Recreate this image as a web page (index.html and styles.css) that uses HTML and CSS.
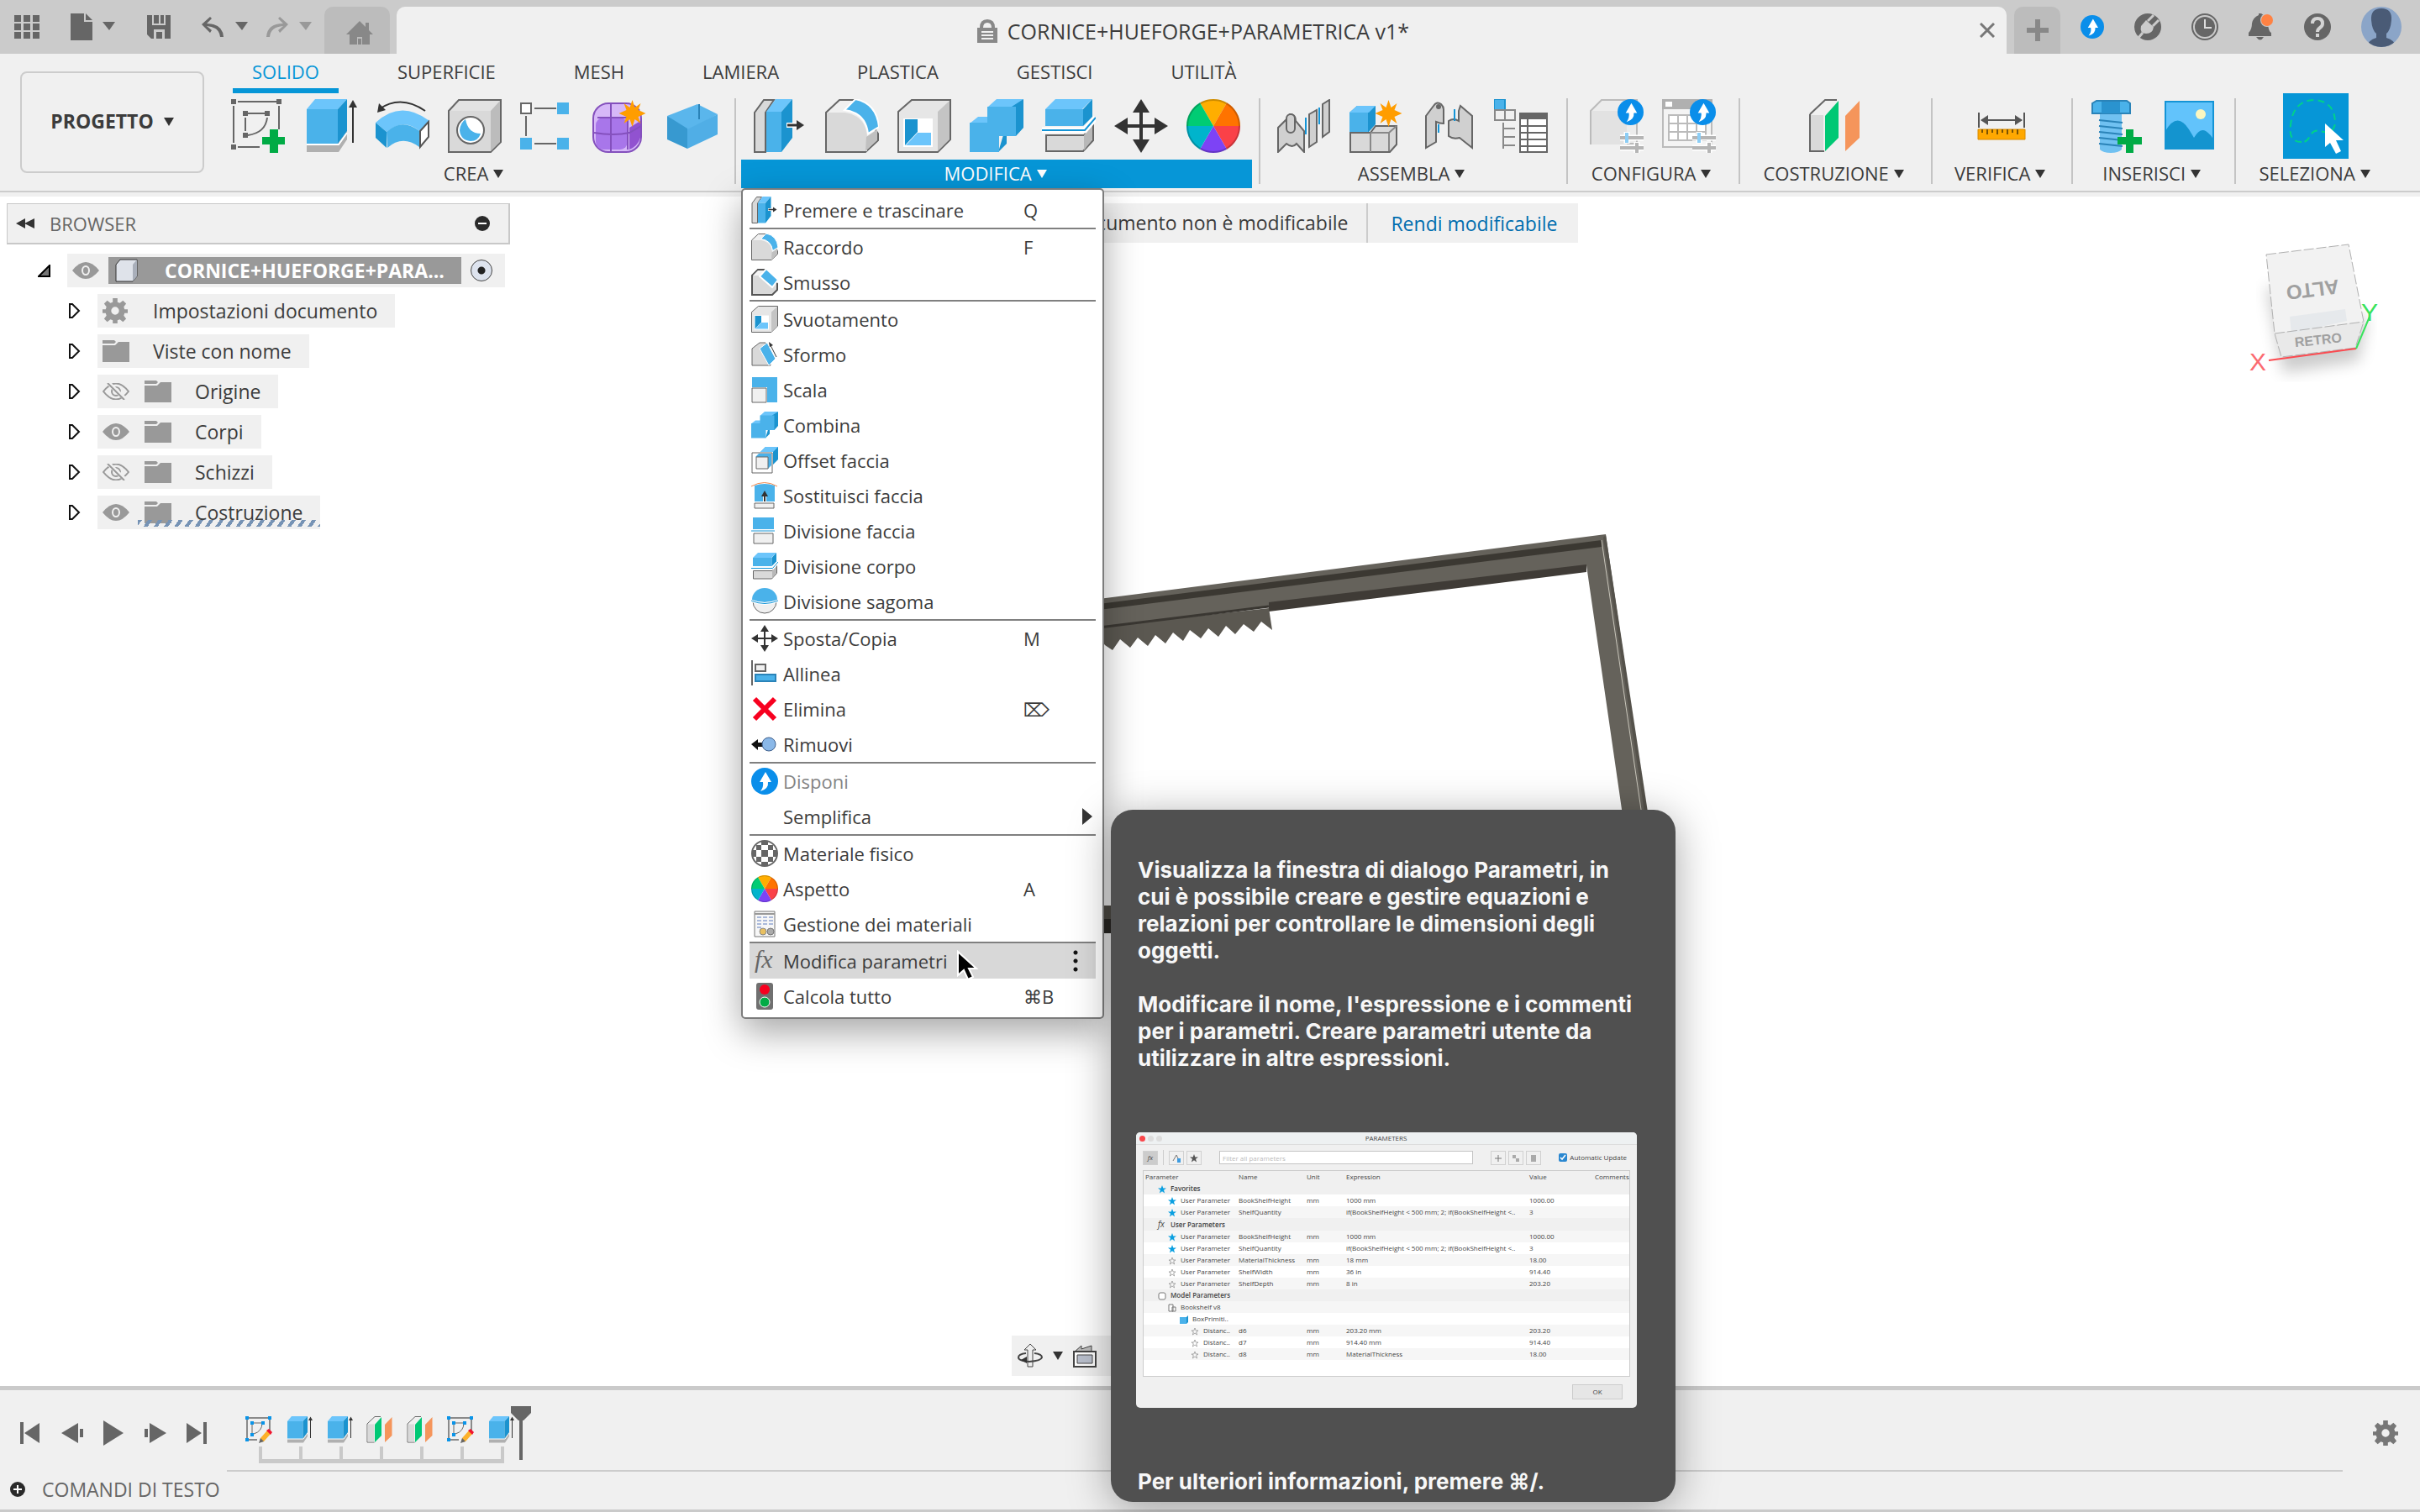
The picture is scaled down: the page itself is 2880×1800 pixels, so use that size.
FILE: index.html
```html
<!DOCTYPE html>
<html lang="it">
<head>
    <meta charset="UTF-8">
    <meta name="viewport" content="width=device-width, initial-scale=1.0">
    <title>CORNICE+HUEFORGE+PARAMETRICA v1*</title>
    <link rel="stylesheet" href="styles.css">
</head>
<body>
    <!-- shared icons -->
    <svg class="sprite" aria-hidden="true">
        <symbol id="i-extrude" viewBox="0 0 64 64">
            <path d="M4 54h36l12-16v10L42 63H4z" fill="#b0b0b0"/>
            <path d="M4 54h38l10-14" fill="none" stroke="#fff" stroke-width="2"/>
            <path d="M4 12L14 0h38L41 12z" fill="#6cc5fb"/>
            <path d="M4 12h37v41H4z" fill="#4ab2ea"/>
            <path d="M41 12L52 0v38L41 53z" fill="#1b93cf"/>
            <path d="M59 52V6" stroke="#333" stroke-width="2"/>
            <path d="M59 1l5 9H54z" fill="#333"/>
        </symbol>
        <symbol id="i-planes" viewBox="0 0 64 64">
            <path d="M2 18L20 1h14M2 18v44h17" fill="#f0f0f0" stroke="#666" stroke-width="2"/>
            <path d="M3 19h15v42H3z" fill="#d9d9d9"/>
            <path d="M20 20L36 2v44L20 62z" fill="#00c874"/>
            <path d="M44 20L61 2v44L44 62z" fill="#f5955b"/>
        </symbol>
        <symbol id="i-sketch-edit" viewBox="0 0 32 32">
            <path d="M4 2h24M2 4v23M29 4v14M4 28h10" fill="none" stroke="#8a8a8a" stroke-width="2"/>
            <path d="M8 8v13M9 8h11q0 10-10 13" fill="none" stroke="#666"/>
            <path d="M0 0h4v4H0zM27 0h4v4h-4zM0 26h4v4H0zM6 6h4v4H6zM19 6h4v4h-4zM6 20h4v4H6z" fill="#0a94e8"/>
            <path d="M18 26l8-9 4 4-8 9-5 1z" fill="#fcb12b"/>
            <path d="M18 26l4 4-6 2z" fill="#666"/>
            <path d="M25 17l3-2 4 4-2 3z" fill="#f0142f"/>
        </symbol>
        <symbol id="i-press" viewBox="0 0 64 64">
            <path d="M2 63V16L13 1h12L15 16v47z" fill="#d9d9d9" stroke="#666" stroke-width="2"/>
            <path d="M16 15L27 0h20L34 15z" fill="#6cc5fb"/>
            <path d="M16 15h18v48H16z" fill="#4ab2ea"/>
            <path d="M34 15L47 0v46L34 63z" fill="#1b93cf"/>
            <path d="M40 31h16" stroke="#fff" stroke-width="6"/>
            <path d="M41 31h13" stroke="#333" stroke-width="3"/>
            <path d="M52 25l9 6-9 6z" fill="#333"/>
        </symbol>
        <symbol id="i-fillet" viewBox="0 0 64 64">
            <path d="M1 63V16L17 1h18l28 40v8L48 63z" fill="#f0f0f0" stroke="#666" stroke-width="2"/>
            <path d="M2 16h22q24 4 26 28v18H2z" fill="#d9d9d9"/>
            <path d="M49 45l13-9v13L48 62z" fill="#c0c0c0"/>
            <path d="M23 13L36 0q25 5 28 33L51 41Q48 16 23 13z" fill="#4ab2ea" stroke="#fff" stroke-width="2"/>
        </symbol>
        <symbol id="i-shell" viewBox="0 0 64 64">
            <path d="M1 15L17 1h46v47L48 63H1z" fill="#e6e6e6" stroke="#666" stroke-width="2"/>
            <path d="M48 15L62 2v46L48 62z" fill="#c4c4c4"/>
            <path d="M7 23h35v34H7z" fill="#fff"/>
            <path d="M9 24h15v15L9 55z" fill="#1b93cf"/>
            <path d="M24 40h16v15H10z" fill="#6cc5fb"/>
        </symbol>
        <symbol id="i-combine" viewBox="0 0 64 64">
            <path d="M0 29l10-8h12V9L32 0h32L54 9 40 44 0 40z" fill="#6cc5fb"/>
            <path d="M64 0v34l-9 10H44v9L34 63 50 9z" fill="#1b93cf"/>
            <path d="M0 28h21V9h34v35H35v19H0z" fill="#4ab2ea"/>
        </symbol>
        <symbol id="i-splitbody" viewBox="0 0 64 64">
            <path d="M5 43h45l11-14v20L49 62H5z" fill="#d9d9d9" stroke="#666" stroke-width="2"/>
            <path d="M50 43l10-13v18L50 61z" fill="#b8b8b8"/>
            <path d="M4 12L16 0h44L48 12z" fill="#6cc5fb"/>
            <path d="M4 12h45v20H4z" fill="#4ab2ea"/>
            <path d="M49 12L60 0v21L49 32z" fill="#1b93cf"/>
            <path d="M0 37h51l13-15" fill="none" stroke="#fff" stroke-width="7"/>
            <path d="M0 37h51l13-15" fill="none" stroke="#1494d6" stroke-width="2"/>
        </symbol>
        <symbol id="i-move" viewBox="0 0 64 64">
            <path d="M32 0l10 16h-8v14h14v-8l16 10-16 10v-8H34v14h8L32 64 22 48h8V34H16v8L0 32l16-10v8h14V16h-8z" fill="#333"/>
        </symbol>
        <symbol id="i-wheel" viewBox="0 0 64 64">
            <path d="M32 32L16 4.300A32 32 0 0 1 48 4.300z" fill="#ffae00"/>
            <path d="M32 32L48 4.300A32 32 0 0 1 64 32z" fill="#ff7300"/>
            <path d="M32 32H64A32 32 0 0 1 48 59.700z" fill="#fa4148"/>
            <path d="M32 32L48 59.700A32 32 0 0 1 16 59.700z" fill="#7d43f5"/>
            <path d="M32 32L16 59.700A32 32 0 0 1 0 32z" fill="#00b4cc"/>
            <path d="M32 32H0A32 32 0 0 1 16 4.300z" fill="#00cc74"/>
            <circle cx="32" cy="32" r="31" fill="none" stroke="#000" stroke-opacity=".2" stroke-width="2"/>
        </symbol>
        <symbol id="i-up" viewBox="0 0 32 32">
            <circle cx="16" cy="16" r="16" fill="#0a8eea"/>
            <path d="M17 5l7 12h-4q1 8-9 11 4-5 3-11h-4z" fill="#fff"/>
        </symbol>
        <symbol id="i-burst" viewBox="0 0 32 32">
            <path d="M16 0l3 9 7-5-3 8 9 4-9 4 3 8-7-5-3 9-3-9-7 5 3-8-9-4 9-4-3-8 7 5z" fill="#ff9d00"/>
        </symbol>
        <symbol id="i-eye" viewBox="0 0 32 20">
            <path d="M0 10Q16-10 32 10 16 30 0 10z" fill="#999"/>
            <ellipse cx="16" cy="10" rx="4" ry="5" fill="none" stroke="#f0f0f0" stroke-width="2"/>
        </symbol>
        <symbol id="i-eyeoff" viewBox="0 0 32 20">
            <path d="M1 10Q16-9 31 10 16 29 1 10z" fill="none" stroke="#999" stroke-width="2"/>
            <circle cx="16" cy="10" r="5" fill="none" stroke="#999" stroke-width="2"/>
            <path d="M7 0l20 19" stroke="#f0f0f0" stroke-width="5"/>
            <path d="M6 0l20 20" stroke="#999" stroke-width="2"/>
        </symbol>
        <symbol id="i-folder" viewBox="0 0 32 26">
            <path d="M0 0h14l2 2-2 2H0z" fill="#999"/>
            <path d="M0 6h15l4-4h13v24H0z" fill="#999"/>
        </symbol>
        <symbol id="i-gear" viewBox="0 0 32 32">
            <path d="M13 0h6v5l3 1 4-3 4 4-3 4 1 3h4v5h-4l-1 3 3 4-4 4-4-3-3 1v4h-6v-4l-3-1-4 3-4-4 3-4-1-3H0v-5h4l1-3-3-4 4-4 4 3 3-1zM16 11a5 5 0 1 0 0 10 5 5 0 0 0 0-10z" fill="currentColor" fill-rule="evenodd"/>
        </symbol>
        <symbol id="i-star" viewBox="0 0 10 10">
            <path d="M5 0l1.300 3.500H10L7 5.800 8.100 9.500 5 7.300 1.900 9.500 3 5.800 0 3.500h3.700z" fill="#0a9fe0"/>
        </symbol>
        <symbol id="i-star-o" viewBox="0 0 10 10">
            <path d="M5 1l1.200 3H9L6.700 5.700 7.600 9 5 7 2.400 9l.9-3.300L1 4h2.800z" fill="none" stroke="#888" stroke-width=".7"/>
        </symbol>
    </svg>

    <header class="titlebar">
        <nav class="quick">
            <button class="q" aria-label="Pannello dati"><svg width="30" height="28"><path d="M0 0h8v8H0zM11 0h8v8h-8zM22 0h8v8h-8zM0 10h8v8H0zM11 10h8v8h-8zM22 10h8v8h-8zM0 20h8v8H0zM11 20h8v8h-8zM22 20h8v8h-8z"/></svg></button>
            <button class="q" aria-label="File"><svg width="54" height="32"><path d="M0 0h16v10h10v22H0zM18 0l8 8h-8zM38 10h15l-7 10z"/></svg></button>
            <button class="q" aria-label="Salva"><svg width="28" height="28"><path d="M0 0h28v28H5l-5-5zM6 0v12h16V0h-2v10h-4V0h-2v10H8V0zM8 28h3v-8h7v8h3V17H8z" fill-rule="evenodd"/></svg></button>
            <button class="q" aria-label="Annulla"><svg width="56" height="24"><path d="M0 9L10 0l2 2-6 6q19 0 20 16h-4Q21 12 6 11l6 5-2 3zM40 6h15l-7 10z"/></svg></button>
            <button class="q q-redo" aria-label="Ripeti"><svg width="56" height="24"><path d="M27 9L17 0l-2 2 6 6Q2 8 1 24h4Q6 12 21 11l-6 5 2 3zM40 6h15l-7 10z"/></svg></button>
        </nav>
        <button class="tab-home" aria-label="Pagina iniziale"><svg width="32" height="28"><path d="M16 0l7 7V2h4v9l5 5h-4v12h-9v-9h-6v9H4V16H0zM14 28v-7h4v7z" fill="#888"/></svg></button>
        <div class="tab-doc">
            <span class="doc-name"><svg width="24" height="28"><path d="M3 10Q3 0 12 0t9 10h3v18H0V10zM7 10h10q0-6-5-6t-5 6z" fill="#888" fill-rule="evenodd"/><path d="M5 15h14M5 19h14M5 23h14" stroke="#f0f0f0" stroke-width="2"/></svg>CORNICE+HUEFORGE+PARAMETRICA v1*</span>
            <button class="close" aria-label="Chiudi"><svg width="18" height="18"><path d="M1 1l16 16M17 1L1 17" stroke="#777" stroke-width="3"/></svg></button>
        </div>
        <button class="tab-new" aria-label="Nuovo progetto"><svg width="26" height="26"><path d="M10 0h6v10h10v6H16v10h-6V16H0v-6h10z" fill="#888"/></svg></button>
        <nav class="account">
            <button aria-label="Aggiorna"><svg width="28" height="28"><use href="#i-up"/></svg></button>
            <button aria-label="Estensioni"><svg width="32" height="32"><circle cx="16" cy="16" r="16" fill="#666"/><path d="M8 15q-2 9 6 9 8 0 9-8l-9-8z" fill="#cbcbcb"/><path d="M16 9l7-7M22 15l7-7M10 23l-6 7" stroke="#cbcbcb" stroke-width="3"/></svg></button>
            <button aria-label="Stato processi"><svg width="32" height="32"><circle cx="16" cy="16" r="15" fill="none" stroke="#666" stroke-width="2"/><circle cx="16" cy="16" r="12" fill="#666"/><path d="M16 7v10h8" fill="none" stroke="#ddd" stroke-width="2"/></svg></button>
            <button aria-label="Notifiche"><svg width="30" height="32"><path d="M12 0h3q7 4 8 13 1 9 4 10v4H0v-4q4-4 4-11 1-7 8-10zM9 28h9q-4 7-9 0z" fill="#666"/><circle cx="22" cy="8" r="8" fill="#cbcbcb"/><circle cx="22" cy="8" r="7" fill="#ff8243"/></svg></button>
            <button aria-label="Guida"><svg width="32" height="32"><circle cx="16" cy="16" r="16" fill="#666"/><path d="M10 12q0-6 6-6t6 6q0 3-3 5t-3 5" fill="none" stroke="#d4d4d4" stroke-width="4"/><path d="M14 24h4v4h-4z" fill="#d4d4d4"/></svg></button>
            <button aria-label="Profilo"><svg width="48" height="48" viewBox="0 0 48 48"><clipPath id="av"><circle cx="24" cy="24" r="24"/></clipPath><g clip-path="url(#av)"><path d="M0 0h48v48H0z" fill="#8ba5c8"/><path d="M24 2q13 0 12 14-1 12-6 16v5q10 3 12 11H6q2-8 12-11v-5q-5-4-6-16Q11 2 24 2z" fill="#4a5b76"/></g></svg></button>
        </nav>
    </header>

    <section class="ribbon">
        <button class="workspace">PROGETTO <i class="caret"></i></button>
        <div class="ribbon-main">
            <nav class="tabs">
                <a href="#" class="active">SOLIDO</a>
                <a href="#">SUPERFICIE</a>
                <a href="#">MESH</a>
                <a href="#">LAMIERA</a>
                <a href="#">PLASTICA</a>
                <a href="#">GESTISCI</a>
                <a href="#">UTILITÀ</a>
            </nav>
            <div class="groups">
                <div class="group">
                    <div class="tools">
                        <button aria-label="Crea schizzo"><svg viewBox="0 0 64 64"><path d="M8 3h46M3 8v44M57 8v28M8 57h26" fill="none" stroke="#666" stroke-width="2"/><path d="M17 22v16M20 17h22M43 22Q41 40 20 43" fill="none" stroke="#666" stroke-width="2"/><path d="M0 0h6v6H0zM54 0h6v6h-6zM0 54h6v6H0zM14 14h6v6h-6zM40 14h6v6h-6zM14 40h6v6h-6z" fill="#666"/><path d="M46 36h10v9h9v9h-9v10H46V54h-9v-9h9z" fill="#00ab45"/></svg></button>
                        <button aria-label="Estrusione"><svg><use href="#i-extrude"/></svg></button>
                        <button aria-label="Rivoluzione"><svg viewBox="0 0 64 64"><path d="M0 28Q30 0 64 26L52 38Q34 22 13 39z" fill="#6cc5fb"/><path d="M13 39Q32 22 52 38V57Q32 42 14 58z" fill="#4ab2ea"/><path d="M0 28l13 11v19L0 46z" fill="#1b93cf"/><path d="M53 38l10-11v18L53 57z" fill="#fff" stroke="#555" stroke-width="2"/><path d="M4 12Q30-6 59 14" fill="none" stroke="#333" stroke-width="2"/><path d="M2 16L4 5l8 8z" fill="#333"/></svg></button>
                        <button aria-label="Foro"><svg viewBox="0 0 64 64"><path d="M1 14L13 1h50v50L51 63H1z" fill="#e2e2e2" stroke="#666" stroke-width="2"/><path d="M2 14h49v48H2z" fill="#d9d9d9"/><path d="M51 14L62 2v49L51 62z" fill="#bcbcbc"/><circle cx="27" cy="37" r="16" fill="#fff" stroke="#666" stroke-width="2"/><path d="M21 24q3 17 18 17-3 9-12 9-12-1-13-13 1-9 7-13z" fill="#4ab2ea"/></svg></button>
                        <button aria-label="Serie rettangolare"><svg viewBox="0 0 64 64"><path d="M17 11h26M17 53h26M7 20v24" stroke="#666" stroke-width="2"/><path d="M1 5h12v12H1z" fill="#fff" stroke="#666" stroke-width="2"/><path d="M44 4h14v14H44zM0 46h14v14H0zM44 46h14v14H44z" fill="#4ab2ea"/></svg></button>
                        <button aria-label="Crea forma"><svg viewBox="0 0 64 64"><rect x="1" y="5" width="57" height="58" rx="18" fill="#d6b8f8" stroke="#8450bd" stroke-width="2"/><path d="M44 34l13-8v20q-3 10-13 14z" fill="#9152d0"/><rect x="4" y="22" width="38" height="38" rx="9" fill="#a876ea"/><path d="M2 40q24 4 42 0l14-8M22 5v57M6 22h36l14-10M42 22v38" fill="none" stroke="#8450bd" stroke-width="2"/><svg x="31" y="1" width="33" height="32" viewBox="0 0 32 32"><use href="#i-burst"/></svg></svg></button>
                        <button aria-label="Parallelepipedo"><svg viewBox="0 0 64 64"><path d="M3 20L39 6l24 12-36 20z" fill="#5ab6ec"/><path d="M3 20l24 15v24L3 48z" fill="#3799d0"/><path d="M27 36l36-18v24L27 59z" fill="#50aee6"/><path d="M41 6v18" stroke="#2a83b8" stroke-width="2"/></svg></button>
                    </div>
                    <button class="label">CREA <i class="caret"></i></button>
                </div>
                <div class="group group-open">
                    <div class="tools">
                        <button aria-label="Premere e trascinare"><svg><use href="#i-press"/></svg></button>
                        <button aria-label="Raccordo"><svg><use href="#i-fillet"/></svg></button>
                        <button aria-label="Svuotamento"><svg><use href="#i-shell"/></svg></button>
                        <button aria-label="Combina"><svg><use href="#i-combine"/></svg></button>
                        <button aria-label="Divisione corpo"><svg><use href="#i-splitbody"/></svg></button>
                        <button aria-label="Sposta/Copia"><svg><use href="#i-move"/></svg></button>
                        <button aria-label="Aspetto"><svg><use href="#i-wheel"/></svg></button>
                    </div>
                    <button class="label" aria-expanded="true">MODIFICA <i class="caret"></i></button>

                    <div class="menu">
                        <button class="item"><svg><use href="#i-press"/></svg><span>Premere e trascinare</span><kbd>Q</kbd></button>
                        <hr>
                        <button class="item"><svg><use href="#i-fillet"/></svg><span>Raccordo</span><kbd>F</kbd></button>
                        <button class="item"><svg viewBox="0 0 32 32"><path d="M1 31V8l7-7h8l15 17v7l-6 6z" fill="#d9d9d9" stroke="#555" stroke-width="2"/><path d="M2 8l6-6h7l-5 6z" fill="#f4f4f4"/><path d="M10 9l8-9 14 13-7 9z" fill="#4ab2ea" stroke="#fff" stroke-width="2"/></svg><span>Smusso</span></button>
                        <hr>
                        <button class="item"><svg><use href="#i-shell"/></svg><span>Svuotamento</span></button>
                        <button class="item"><svg viewBox="0 0 32 32"><path d="M1 29V9l9-7h7l6 27z" fill="#d9d9d9" stroke="#666"/><path d="M10 9l9-7 10 19-8 8z" fill="#4ab2ea" stroke="#fff"/><path d="M30 19L23 5" stroke="#333"/><path d="M21 1l5 4-4 2z" fill="#333"/></svg><span>Sformo</span></button>
                        <button class="item"><svg viewBox="0 0 32 32"><path d="M1 1h30v30H19V13H1z" fill="#4ab2ea"/><path d="M1 14h17v17H1z" fill="#f0f0f0" stroke="#666"/></svg><span>Scala</span></button>
                        <button class="item"><svg><use href="#i-combine"/></svg><span>Combina</span></button>
                        <button class="item"><svg viewBox="0 0 32 32"><path d="M11 6l6-6h15v15l-6 6V6z" fill="#1b93cf"/><path d="M11 6l6-6h15l-6 6z" fill="#6cc5fb"/><path d="M1 7h24v24H1z" fill="#fff" stroke="#666"/><path d="M5 12l4-4h15v14l-4 4V12z" fill="#4ab2ea"/><path d="M6 12h14v14H6z" fill="#f0f0f0" stroke="#666"/></svg><span>Offset faccia</span></button>
                        <button class="item"><svg viewBox="0 0 32 32"><path d="M4 23V4q12-4 24 0v19z" fill="#4ab2ea"/><path d="M0 5q16-9 31 0" fill="none" stroke="#f08a50"/><path d="M4 25h23v6H4z" fill="#f0f0f0" stroke="#666"/><path d="M16 24V14" stroke="#fff" stroke-width="4"/><path d="M16 23V14" stroke="#333" stroke-width="2"/><path d="M16 10l4 7h-8z" fill="#333"/></svg><span>Sostituisci faccia</span></button>
                        <button class="item"><svg viewBox="0 0 32 32"><path d="M2 0h25v14H2z" fill="#4ab2ea"/><path d="M3 19h23v12H3z" fill="#f0f0f0" stroke="#666"/><path d="M0 16h28" stroke="#1494d6"/></svg><span>Divisione faccia</span></button>
                        <button class="item"><svg><use href="#i-splitbody"/></svg><span>Divisione corpo</span></button>
                        <button class="item"><svg viewBox="0 0 32 32"><circle cx="16" cy="16" r="14" fill="#f0f0f0" stroke="#666"/><path d="M1 14a15 14 0 0 1 30 0q-15 6-30 0z" fill="#4ab2ea"/><path d="M0 15q16 7 32 0" fill="none" stroke="#fff" stroke-width="3"/><path d="M0 15q16 7 32 0" fill="none" stroke="#1494d6"/></svg><span>Divisione sagoma</span></button>
                        <hr>
                        <button class="item"><svg><use href="#i-move"/></svg><span>Sposta/Copia</span><kbd>M</kbd></button>
                        <button class="item"><svg viewBox="0 0 32 32"><path d="M1 0v30" stroke="#666" stroke-width="2"/><path d="M5 5h12v8H5z" fill="#f0f0f0" stroke="#666" stroke-width="2"/><path d="M5 17h24v8H5z" fill="#4ab2ea" stroke="#2a83b8" stroke-width="2"/></svg><span>Allinea</span></button>
                        <button class="item"><svg viewBox="0 0 32 32"><path d="M4 4l24 24M28 4L4 28" stroke="#f7001f" stroke-width="6"/></svg><span>Elimina</span><kbd>⌦</kbd></button>
                        <button class="item"><svg viewBox="0 0 32 32"><path d="M0 16l8-6v4h6v5H8v4z" fill="#111"/><circle cx="21" cy="16" r="8" fill="#8ab8e8" stroke="#3d5f8c"/></svg><span>Rimuovi</span></button>
                        <hr>
                        <button class="item" disabled><svg><use href="#i-up"/></svg><span>Disponi</span></button>
                        <button class="item"><svg></svg><span>Semplifica</span><i class="sub"></i></button>
                        <hr>
                        <button class="item"><svg viewBox="0 0 32 32"><circle cx="16" cy="16" r="15" fill="#fff" stroke="#666" stroke-width="2"/><path d="M12 12h8v8h-8zM6 6h6v6H6zM20 6h6v6h-6zM6 20h6v6H6zM20 20h6v6h-6zM12 1h8v5h-8zM12 26h8v5h-8zM1 12h5v8H1zM26 12h5v8h-5z" fill="#666"/></svg><span>Materiale fisico</span></button>
                        <button class="item"><svg><use href="#i-wheel"/></svg><span>Aspetto</span><kbd>A</kbd></button>
                        <button class="item"><svg viewBox="0 0 32 32"><path d="M4 1h24v30H4z" fill="#f7f7f7" stroke="#777"/><path d="M4 4h24" stroke="#999" stroke-width="2"/><path d="M7 8h5M14 8h5M21 8h5M7 12h5M14 12h5M21 12h5M7 16h5M14 16h5M21 16h5M7 20h5" stroke="#aab9da" stroke-width="2"/><circle cx="14" cy="25" r="4" fill="#e9c060" stroke="#888"/><circle cx="23" cy="25" r="4" fill="#aaa" stroke="#777"/></svg><span>Gestione dei materiali</span></button>
                        <hr>
                        <button class="item hover"><svg viewBox="0 0 32 32"><text class="fx" x="4" y="24">fx</text></svg><span>Modifica parametri</span><i class="dots"></i></button>
                        <button class="item"><svg viewBox="0 0 32 32"><rect x="6" y="0" width="20" height="32" rx="3" fill="#707070"/><circle cx="16" cy="8" r="6" fill="#f7001f"/><circle cx="16" cy="23" r="6" fill="#00ab45" stroke="#fff"/></svg><span>Calcola tutto</span><kbd>⌘B</kbd></button>

                        <svg class="cursor" width="28" height="40" viewBox="0 0 28 40"><path d="M2 2v28l7-6 5 11 6-3-5-10h9z" fill="#000" stroke="#fff" stroke-width="2"/></svg>

                        <div class="tooltip">
                            <p>Visualizza la finestra di dialogo Parametri, in cui è possibile creare e gestire equazioni e relazioni per controllare le dimensioni degli oggetti.</p>
                            <p>Modificare il nome, l'espressione e i commenti per i parametri. Creare parametri utente da utilizzare in altre espressioni.</p>
                            <div class="dialog">
                                <div class="dialog-title"><i class="red"></i><i></i><i></i><b>PARAMETERS</b></div>
                                <div class="dialog-bar">
                                    <button class="mini on"><em>fx</em></button>
                                    <span class="vr"></span>
                                    <button class="mini" aria-label="Nuovo"><svg viewBox="0 0 10 10"><path d="M1 8L5 1l2 4" fill="none" stroke="#777"/><path d="M6 5h4v5H6z" fill="#3d9be0"/></svg></button>
                                    <button class="mini" aria-label="Preferiti"><svg viewBox="0 0 10 10"><path d="M5 0l1.300 3.500H10L7 5.800 8.100 9.500 5 7.300 1.900 9.500 3 5.800 0 3.500h3.700z" fill="#555"/></svg></button>
                                    <input class="filter" type="text" placeholder="Filter all parameters" aria-label="Filter all parameters">
                                    <button class="mini" aria-label="Aggiungi"><svg viewBox="0 0 10 10"><path d="M5 1v8M1 5h8" stroke="#777"/></svg></button>
                                    <button class="mini" aria-label="Copia"><svg viewBox="0 0 10 10"><path d="M1 1h4v4H1zM5 5h4v4H5z" fill="#aaa"/></svg></button>
                                    <button class="mini" aria-label="Elimina"><svg viewBox="0 0 10 10"><path d="M2 1h6v8H2z" fill="#aaa"/></svg></button>
                                    <label class="auto"><input type="checkbox" checked>Automatic Update</label>
                                </div>
                                <div class="table-box">
                                <table>
                                    <colgroup><col class="c1"><col class="c2"><col class="c3"><col class="c4"><col class="c5"><col></colgroup>
                                    <thead><tr><th>Parameter</th><th>Name</th><th>Unit</th><th>Expression</th><th>Value</th><th>Comments</th></tr></thead>
                                    <tbody>
                                        <tr class="cat"><td colspan="6"><svg><use href="#i-star"/></svg>Favorites</td></tr>
                                        <tr><td class="l1"><svg><use href="#i-star"/></svg>User Parameter</td><td>BookShelfHeight</td><td>mm</td><td>1000 mm</td><td>1000.00</td><td></td></tr>
                                        <tr class="alt"><td class="l1"><svg><use href="#i-star"/></svg>User Parameter</td><td>ShelfQuantity</td><td></td><td>if(BookShelfHeight &lt; 500 mm; 2; if(BookShelfHeight &lt;..</td><td>3</td><td></td></tr>
                                        <tr class="cat"><td colspan="6"><em>fx</em>User Parameters</td></tr>
                                        <tr class="alt"><td class="l1"><svg><use href="#i-star"/></svg>User Parameter</td><td>BookShelfHeight</td><td>mm</td><td>1000 mm</td><td>1000.00</td><td></td></tr>
                                        <tr><td class="l1"><svg><use href="#i-star"/></svg>User Parameter</td><td>ShelfQuantity</td><td></td><td>if(BookShelfHeight &lt; 500 mm; 2; if(BookShelfHeight &lt;..</td><td>3</td><td></td></tr>
                                        <tr class="alt"><td class="l1"><svg><use href="#i-star-o"/></svg>User Parameter</td><td>MaterialThickness</td><td>mm</td><td>18 mm</td><td>18.00</td><td></td></tr>
                                        <tr><td class="l1"><svg><use href="#i-star-o"/></svg>User Parameter</td><td>ShelfWidth</td><td>mm</td><td>36 in</td><td>914.40</td><td></td></tr>
                                        <tr class="alt"><td class="l1"><svg><use href="#i-star-o"/></svg>User Parameter</td><td>ShelfDepth</td><td>mm</td><td>8 in</td><td>203.20</td><td></td></tr>
                                        <tr class="cat"><td colspan="6"><svg viewBox="0 0 10 10"><rect x="1" y="1" width="8" height="8" rx="2" fill="#fff" stroke="#777"/></svg>Model Parameters</td></tr>
                                        <tr class="alt"><td class="l1" colspan="6"><svg viewBox="0 0 10 10"><path d="M1 1h5v8H1zM5 4h4v5H5z" fill="#fff" stroke="#777"/></svg>Bookshelf v8</td></tr>
                                        <tr><td class="l2" colspan="6"><svg viewBox="0 0 10 10"><path d="M0 2h8v8H0z" fill="#4ab2ea"/><path d="M8 2l2-2v8l-2 2z" fill="#1b93cf"/></svg>BoxPrimiti..</td></tr>
                                        <tr class="alt"><td class="l3"><svg><use href="#i-star-o"/></svg>Distanc..</td><td>d6</td><td>mm</td><td>203.20 mm</td><td>203.20</td><td></td></tr>
                                        <tr><td class="l3"><svg><use href="#i-star-o"/></svg>Distanc..</td><td>d7</td><td>mm</td><td>914.40 mm</td><td>914.40</td><td></td></tr>
                                        <tr class="alt"><td class="l3"><svg><use href="#i-star-o"/></svg>Distanc..</td><td>d8</td><td>mm</td><td>MaterialThickness</td><td>18.00</td><td></td></tr>
                                    </tbody>
                                </table>
                                </div>
                                <button class="ok">OK</button>
                            </div>
                            <p class="more">Per ulteriori informazioni, premere ⌘/.</p>
                        </div>
                    </div>
                </div>
                <div class="group">
                    <div class="tools">
                        <button aria-label="Nuovo giunto"><svg viewBox="0 0 64 64"><g fill="#d0d0d0" stroke="#666" stroke-width="2"><path d="M54 6l8-5v38l-8 6z"/><path d="M38 18l9-5v38l-9 6z"/><path d="M1 34l10-10 4-6q7 0 7 8l10 12v25l-9-10q-5 6-12 0L1 63z"/><rect x="11" y="18" width="10" height="22" rx="5"/></g><path d="M34 22v20M50 10v20" stroke="#1494d6" stroke-width="2"/></svg></button>
                        <button aria-label="Nuovo componente"><svg viewBox="0 0 64 64"><path d="M0 16L9 8h22v22l-8 9H0z" fill="#1b93cf"/><path d="M0 16L9 8h22l-8 8z" fill="#6cc5fb"/><path d="M0 16h22v23H0z" fill="#4ab2ea"/><path d="M1 40h24l6-8h25v22l-8 9H1z" fill="#d9d9d9" stroke="#666" stroke-width="2"/><path d="M25 40v23M25 40h22l9-8M47 40v22" fill="none" stroke="#888" stroke-width="2"/><svg x="30" y="1" width="33" height="32" viewBox="0 0 32 32"><use href="#i-burst"/></svg></svg></button>
                        <button aria-label="Giunto"><svg viewBox="0 0 64 64"><g fill="#d0d0d0" stroke="#666" stroke-width="2"><path d="M5 20l9-12q4-6 9-2 3 3 3 6v17q-5 0-9-2v24L5 58z"/><path d="M44 14l2-6 14 12v38l-15-12q-8 2-13-2V26q6-4 12 0z"/></g><circle cx="20" cy="9" r="3" fill="#666"/><path d="M39 12v14M20 30v10" stroke="#1494d6" stroke-width="2"/></svg></button>
                        <button aria-label="Componenti"><svg viewBox="0 0 64 64"><path d="M0 0h13v13H0z" fill="#4ab2ea" stroke="#1b93cf" stroke-width="2"/><path d="M1 13h12v12H1zM13 13h12v12H13zM11 28v31M11 35h14M11 45h14M11 55h14" fill="none" stroke="#888" stroke-width="2"/><path d="M31 17h32v46H31z" fill="#fff" stroke="#666" stroke-width="2"/><path d="M30 16h34v8H30z" fill="#666"/><path d="M40 24v38M31 32h32M31 40h32M31 48h32M31 56h32" stroke="#666" stroke-width="2"/></svg></button>
                    </div>
                    <button class="label">ASSEMBLA <i class="caret"></i></button>
                </div>
                <div class="group">
                    <div class="tools">
                        <button aria-label="Configura"><svg viewBox="0 0 64 64"><path d="M1 14L14 1h42v52H1z" fill="#ececec" stroke="#bbb" stroke-width="2"/><path d="M2 14h42v40H2z" fill="#e2e2e2"/><path d="M36 46h28M36 58h28M44 39v14M56 51v13" stroke="#fff" stroke-width="7"/><path d="M36 46h28M36 58h28M56 52v12" stroke="#b5b5b5" stroke-width="4"/><path d="M44 40v12" stroke="#8ccdf5" stroke-width="4"/><svg x="33" y="0" width="31" height="31" viewBox="0 0 32 32"><use href="#i-up"/></svg></svg></button>
                        <button aria-label="Tabella"><svg viewBox="0 0 64 64"><path d="M1 1h58v56H1z" fill="#f4f4f4" stroke="#bbb" stroke-width="2"/><path d="M0 0h60v12H0z" fill="#b0b0b0"/><path d="M4 3h8v6H4z" fill="#fff"/><path d="M8 19h44v30H8zM8 29h44M8 39h44M19 19v30M30 19v30M41 19v30" fill="#fff" stroke="#bbb" stroke-width="2"/><path d="M36 46h28M36 58h28M44 39v14M56 51v13" stroke="#fff" stroke-width="7"/><path d="M36 46h28M36 58h28M56 52v12" stroke="#b5b5b5" stroke-width="4"/><path d="M44 40v12" stroke="#8ccdf5" stroke-width="4"/><svg x="33" y="0" width="31" height="31" viewBox="0 0 32 32"><use href="#i-up"/></svg></svg></button>
                    </div>
                    <button class="label">CONFIGURA <i class="caret"></i></button>
                </div>
                <div class="group">
                    <div class="tools"><button aria-label="Piano di offset"><svg><use href="#i-planes"/></svg></button></div>
                    <button class="label">COSTRUZIONE <i class="caret"></i></button>
                </div>
                <div class="group">
                    <div class="tools"><button aria-label="Misura"><svg viewBox="0 0 64 64"><path d="M5 16v18M59 16v18M8 25h48" stroke="#555" stroke-width="2"/><path d="M7 25l9-6v12zM57 25l-9-6v12z" fill="#555"/><path d="M4 36h56v12H4z" fill="#ffa800" stroke="#d98a00"/><path d="M9 36v4M15 36v6M21 36v4M27 36v6M33 36v4M39 36v6M45 36v4M51 36v6" stroke="#7a5200" stroke-width="2"/></svg></button></div>
                    <button class="label">VERIFICA <i class="caret"></i></button>
                </div>
                <div class="group">
                    <div class="tools">
                        <button aria-label="Inserisci elemento di fissaggio"><svg viewBox="0 0 64 64"><path d="M12 18h26v42q-4 4-13 4t-13-4z" fill="#70c1f1"/><path d="M11 25l28 3M11 32l28 3M11 39l28 3M11 46l28 3M11 53l28 3" stroke="#2a83b8" stroke-width="2"/><path d="M3 5l5-3h36l4 3v12H3z" fill="#4ab2ea" stroke="#2a83b8" stroke-width="2"/><path d="M14 3h22v14H14z" fill="#2a93cf"/><path d="M43 36h9v9h10v9H52v10h-9V54H33v-9h10z" fill="#00ab45"/></svg></button>
                        <button aria-label="Inserisci immagine"><svg viewBox="0 0 64 64"><path d="M4 3h57v56H4z" fill="#62c3fb" stroke="#1494d6" stroke-width="2"/><path d="M4 59V38Q18 14 32 36l6 10q7-12 14-8 6 4 9 10v11z" fill="#1494cf"/><circle cx="46" cy="18" r="6" fill="#fcf7c0"/></svg></button>
                    </div>
                    <button class="label">INSERISCI <i class="caret"></i></button>
                </div>
                <div class="group">
                    <div class="tools"><button class="selected" aria-label="Seleziona"><svg viewBox="0 0 78 78"><path d="M22 58Q6 58 9 38 12 8 38 8q24 2 24 28-2 14-18 9-8-2-12 6t-10 7z" fill="none" stroke="#00d28a" stroke-width="2" stroke-dasharray="8 5"/><path d="M50 36v28l6-5 7 13 6-3-6-13h9z" fill="#fff"/></svg></button></div>
                    <button class="label">SELEZIONA <i class="caret"></i></button>
                </div>
            </div>
        </div>
    </section>

    <main class="canvas">
        <aside class="browser">
            <div class="browser-head">
                <button aria-label="Riduci"><svg width="22" height="12"><path d="M0 6l11-6v12zM10 6l12-6v12z" fill="#333"/></svg></button>
                <span>BROWSER</span>
                <button class="right" aria-label="Opzioni"><svg width="18" height="18"><circle cx="9" cy="9" r="9" fill="#2a2a2a"/><path d="M4 9h10" stroke="#fff" stroke-width="2"/></svg></button>
            </div>
            <div class="row root">
                <svg width="15" height="15"><path d="M1 14L14 1v13z" fill="#777" stroke="#000" stroke-width="2"/></svg>
                <div class="chip">
                    <svg width="32" height="20"><use href="#i-eye"/></svg>
                    <div class="name"><svg width="28" height="28"><path d="M1 7l5-6h20v20l-5 6H1z" fill="#dfe3ea" stroke="#333"/><path d="M21 7l5-6v20l-5 6z" fill="#a9afba"/></svg>CORNICE+HUEFORGE+PARA...</div>
                    <input type="radio" checked aria-label="Attiva componente">
                </div>
            </div>
            <div class="row"><svg class="tri"><path d="M1 1h3l8 8-8 8H1z"/></svg><div class="chip"><svg class="g" width="30" height="30"><use href="#i-gear"/></svg><span>Impostazioni documento</span></div></div>
            <div class="row"><svg class="tri"><path d="M1 1h3l8 8-8 8H1z"/></svg><div class="chip"><svg width="32" height="26"><use href="#i-folder"/></svg><span>Viste con nome</span></div></div>
            <div class="row"><svg class="tri"><path d="M1 1h3l8 8-8 8H1z"/></svg><div class="chip"><svg width="32" height="20"><use href="#i-eyeoff"/></svg><svg width="32" height="26"><use href="#i-folder"/></svg><span>Origine</span></div></div>
            <div class="row"><svg class="tri"><path d="M1 1h3l8 8-8 8H1z"/></svg><div class="chip"><svg width="32" height="20"><use href="#i-eye"/></svg><svg width="32" height="26"><use href="#i-folder"/></svg><span>Corpi</span></div></div>
            <div class="row"><svg class="tri"><path d="M1 1h3l8 8-8 8H1z"/></svg><div class="chip"><svg width="32" height="20"><use href="#i-eyeoff"/></svg><svg width="32" height="26"><use href="#i-folder"/></svg><span>Schizzi</span></div></div>
            <div class="row"><svg class="tri"><path d="M1 1h3l8 8-8 8H1z"/></svg><div class="chip hatch"><svg width="32" height="20"><use href="#i-eye"/></svg><svg width="32" height="26"><use href="#i-folder"/></svg><span>Costruzione</span></div></div>
        </aside>

        <div class="notice"><span>Il documento non è modificabile</span><a href="#">Rendi modificabile</a></div>

        <!-- frame model -->
        <svg class="model" viewBox="1300 600 700 560">
            <path d="M1300 714L1911 636l48 328 4 27h-29L1888 673l-588 75z" fill="#65625b"/>
            <path d="M1300 720l606-77v8l-606 76z" fill="#3b3832"/>
            <path d="M1510 717l378-45v9l-378 47z" fill="#3f3b36"/>
            <path d="M1906 643l51 348" stroke="#c9c6bb" stroke-width="1" fill="none"/>
            <path d="M1908 640l51 340 4 0-52-343z" fill="#55524b"/>
            <path d="M1300 747l210-23 4 26-13-10-9 12-12-9-10 12-11-10-9 13-12-10-9 12-13-10-8 13-12-10-9 13-12-10-9 13-12-10-9 12-12-10-9 13-9-6z" fill="#5b5851"/>
            <path d="M1300 748l210-26" stroke="#3a3732" stroke-width="3"/>
            <path d="M1300 1078h30v16h-30z" fill="#55524b"/>
            <path d="M1300 1094h30v17h-30z" fill="#2e2c28"/>
        </svg>

        <svg class="cube" viewBox="2660 270 190 190">
            <defs><filter id="soft"><feGaussianBlur stdDeviation="9"/></filter></defs>
            <path d="M2697 340l120 40-10 50-90 14z" fill="#000" opacity=".2" filter="url(#soft)"/>
            <path d="M2707 397l106-14-10 31-88 11z" fill="#e9e9e9"/>
            <path d="M2697 303l98-12 18 92-106 14z" fill="#f2f2f2"/>
            <path d="M2725 377l66-9 2 14-66 15z" fill="#e6e9ec"/>
            <path d="M2697 303l98-12 18 92-10 31-88 11-8-28zM2707 397l106-14" fill="none" stroke="#b0b0b0" stroke-dasharray="12 3"/>
            <text class="face" x="2752" y="343" transform="rotate(173 2752 343)">ALTO</text>
            <text class="face small" x="2759" y="406" transform="rotate(-6 2759 406)">RETRO</text>
            <path d="M2700 429l104-14" stroke="#fb4a50" stroke-width="2"/>
            <path d="M2804 415l16-38" stroke="#38e35c" stroke-width="2"/>
            <text class="axis x" x="2677" y="441">X</text>
            <text class="axis y" x="2810" y="382">Y</text>
        </svg>

        <div class="navbar">
            <button aria-label="Orbita"><svg width="30" height="30"><path d="M15 1l7 7h-4v20h-6V8H8z" fill="#eee" stroke="#444"/><path d="M10 12Q1 13 1 17t13 5q14-1 15-5 0-4-9-5" fill="none" stroke="#444" stroke-width="2"/><path d="M4 20l7-4v8z" fill="#333"/></svg></button>
            <i class="caret"></i>
            <button aria-label="Visualizza"><svg width="28" height="28"><path d="M2 9l8-7v4l12-4v7z" fill="#bbb" stroke="#444"/><path d="M1 9h26v18H1z" fill="#fff" stroke="#444" stroke-width="2"/><path d="M5 13h18v10H5z" fill="#b9bfcc" stroke="#444"/></svg></button>
        </div>
    </main>

    <section class="timeline">
        <div class="playback">
            <button aria-label="Inizio"><svg width="24" height="26"><path d="M0 0h4v26H0zM23 1v24L5 13z"/></svg></button>
            <button aria-label="Indietro"><svg width="26" height="26"><path d="M20 1v24L0 13zM22 8h4v10h-4z"/></svg></button>
            <button aria-label="Riproduci"><svg width="24" height="30"><path d="M0 0l24 15L0 30z"/></svg></button>
            <button aria-label="Avanti"><svg width="26" height="26"><path d="M6 1v24l20-12zM0 8h4v10H0z"/></svg></button>
            <button aria-label="Fine"><svg width="24" height="26"><path d="M20 0h4v26h-4zM0 1v24l18-12z"/></svg></button>
        </div>
        <div class="track">
            <button aria-label="Schizzo1"><svg><use href="#i-sketch-edit"/></svg></button>
            <button aria-label="Estrusione1"><svg><use href="#i-extrude"/></svg></button>
            <button aria-label="Estrusione2"><svg><use href="#i-extrude"/></svg></button>
            <button aria-label="Piano1"><svg><use href="#i-planes"/></svg></button>
            <button aria-label="Piano2"><svg><use href="#i-planes"/></svg></button>
            <button aria-label="Schizzo2"><svg><use href="#i-sketch-edit"/></svg></button>
            <button aria-label="Estrusione3"><svg><use href="#i-extrude"/></svg></button>
            <svg class="marker" width="24" height="64"><path d="M0 0h24v8l-9 9h-1v47h-4V17H9L0 8z" fill="#666"/></svg>
        </div>
        <button class="settings" aria-label="Impostazioni"><svg width="30" height="30"><use href="#i-gear"/></svg></button>
    </section>

    <footer class="commands">
        <button aria-label="Espandi"><svg width="18" height="18"><circle cx="9" cy="9" r="9" fill="#2a2a2a"/><path d="M4 9h10M9 4v10" stroke="#fff" stroke-width="2"/></svg></button>
        <span>COMANDI DI TESTO</span>
    </footer>
</body>
</html>
```
FILE: styles.css
```css
* {
    box-sizing: border-box;
}
body {
    margin: 0;
    height: 100vh;
    overflow: hidden;
    display: flex;
    flex-direction: column;
    background: #fff;
    color: #3c3c3c;
    font-family: "Open Sans", "Noto Sans", "DejaVu Sans", sans-serif;
    font-size: 22px;
    line-height: 30px;
}
button {
    margin: 0;
    padding: 0;
    border: 0;
    background: none;
    color: inherit;
    font: inherit;
}
svg {
    display: block;
    flex: none;
}
a {
    color: inherit;
    text-decoration: none;
}
.sprite {
    position: absolute;
    width: 0;
    height: 0;
}
.caret {
    display: inline-block;
    border: 6px solid transparent;
    border-top: 10px solid #333;
    border-bottom: 0;
    vertical-align: 3px;
}

/* title bar */
.titlebar {
    height: 64px;
    padding-top: 8px;
    display: flex;
    background: #cbcbcb;
}
.quick {
    width: 386px;
    padding: 0 12px 8px 17px;
    display: flex;
    align-items: center;
    gap: 37px;
}
.q {
    fill: #666;
}
.q-redo {
    margin-left: -17px;
    fill: #999;
}
.tab-home {
    width: 78px;
    padding: 6px 0 0 6px;
    display: flex;
    align-items: center;
    justify-content: center;
    border-radius: 10px 10px 0 0;
    background: #bcbcbc;
}
.tab-doc {
    flex: 1;
    margin: 0 9px 0 8px;
    display: flex;
    align-items: center;
    border-radius: 10px 10px 0 0;
    background: #f0f0f0;
}
.doc-name {
    flex: 1;
    padding: 2px 0 0 12px;
    display: flex;
    justify-content: center;
    align-items: center;
    gap: 12px;
    font-size: 25px;
}
.close {
    margin-right: 14px;
}
.tab-new {
    width: 55px;
    display: flex;
    align-items: center;
    justify-content: center;
    border-radius: 10px 10px 0 0;
    background: #bcbcbc;
}
.account {
    width: 428px;
    padding: 0 22px 8px 24px;
    display: flex;
    align-items: center;
    justify-content: space-between;
}

/* ribbon */
.ribbon {
    position: relative;
    z-index: 2;
    height: 170px;
    display: flex;
    background: linear-gradient(#ccc, #ccc) 0 163px / 100% 2px no-repeat #f0f0f0;
}
.workspace {
    width: 219px;
    height: 121px;
    margin: 21px 13px 0 24px;
    padding-bottom: 4px;
    border: 2px solid #ccc;
    border-radius: 8px;
    font-size: 23px;
    font-weight: 700;
}
.workspace .caret {
    margin-left: 6px;
}
.ribbon-main {
    flex: 1;
    padding-right: 27px;
}
.tabs {
    height: 47px;
    padding-left: 21px;
    display: flex;
    gap: 47px;
}
.tabs a {
    padding: 6px 23px 0;
}
.tabs .active {
    border-bottom: 6px solid #0696d7;
    color: #0696d7;
}
.groups {
    height: 113px;
    display: grid;
    grid-template-columns: 618fr 624fr 366fr 205fr 229fr 167fr 194fr 194fr;
}
.group {
    position: relative;
    padding-top: 7px;
}
.group + .group::before {
    content: "";
    position: absolute;
    left: 0;
    top: 6px;
    width: 2px;
    height: 102px;
    background: #c4c4c4;
}
.tools {
    height: 72px;
    display: flex;
    justify-content: center;
    align-items: flex-start;
    gap: 22px;
}
.tools > button > svg {
    width: 64px;
    height: 64px;
}
.tools .selected {
    margin-top: -7px;
    background: #0696d7;
}
.tools .selected > svg {
    width: 78px;
    height: 78px;
}
.label {
    position: relative;
    display: block;
    width: calc(100% - 16px);
    height: 34px;
    margin: 0 auto;
    padding: 0 3px 2px 0;
    line-height: 32px;
}
.group-open .label {
    background: #0696d7;
    color: #fff;
}
.group-open .caret {
    border-top-color: #fff;
}

/* drop-down menu */
.menu {
    position: absolute;
    left: 8px;
    top: 113px;
    width: 432px;
    padding: 3px 8px 4px;
    border: 2px solid #7c7c7c;
    border-radius: 5px;
    background: #fff;
    box-shadow: 0 16px 44px rgba(0, 0, 0, 0.35);
}
.menu hr {
    height: 2px;
    margin: 0;
    border: 0;
    background: #808080;
}
.item {
    width: 100%;
    height: 42px;
    padding-left: 2px;
    display: flex;
    align-items: center;
    gap: 6px;
    text-align: left;
}
.item > svg {
    width: 32px;
    height: 32px;
}
.item span {
    flex: 1;
}
.item kbd {
    width: 86px;
    font-family: inherit;
}
.item:disabled {
    color: #848484;
}
.item.hover {
    background: #d8d8d8;
}
.sub {
    margin-right: 4px;
    border: 10px solid transparent;
    border-left: 12px solid #333;
    border-right: 0;
}
.dots {
    width: 6px;
    height: 30px;
    margin-right: 21px;
    background: radial-gradient(circle, #111 2px, transparent 3px) 0 0 / 6px 10px;
}
.fx {
    fill: #666;
    font: italic 30px "Liberation Serif", serif;
}
.cursor {
    position: absolute;
    left: 254px;
    top: 905px;
}

/* tooltip */
.tooltip {
    position: absolute;
    left: 438px;
    top: 738px;
    width: 672px;
    height: 824px;
    padding: 56px 42px 8px 32px;
    display: flex;
    flex-direction: column;
    border-radius: 26px;
    background: #505050;
    box-shadow: 0 8px 50px rgba(0, 0, 0, 0.35);
    color: #f7f7f7;
    font-family: Inter, "DejaVu Sans", sans-serif;
    font-size: 26px;
    font-weight: 700;
    line-height: 32px;
}
.tooltip p {
    margin: 0 0 32px;
}
.tooltip .more {
    margin: auto 0 0;
}
.dialog {
    height: 328px;
    margin: 40px 4px 0 -2px;
    display: flex;
    flex-direction: column;
    border-radius: 5px;
    overflow: hidden;
    background: #f0f0f0;
    color: #444;
    font-family: "Open Sans", sans-serif;
    font-size: 8px;
    font-weight: 400;
    line-height: 14px;
}
.dialog-title {
    height: 15px;
    padding-left: 4px;
    display: flex;
    align-items: center;
    gap: 3px;
    background: #eef1f2;
    border-bottom: 1px solid #ddd;
}
.dialog-title i {
    width: 7px;
    height: 7px;
    border-radius: 50%;
    background: #ddd;
}
.dialog-title .red {
    background: #f9474b;
}
.dialog-title b {
    flex: 1;
    padding-right: 35px;
    font-weight: 400;
    text-align: center;
}
.dialog-bar {
    height: 30px;
    padding: 0 12px 0 8px;
    display: flex;
    align-items: center;
    gap: 3px;
}
.mini {
    width: 18px;
    height: 17px;
    padding: 3px;
    border: 1px solid #d0d0d0;
}
.mini.on {
    padding: 0;
    background: #ccc;
}
.mini svg {
    width: 10px;
    height: 10px;
}
.vr {
    width: 1px;
    height: 18px;
    margin: 0 3px;
    background: #ccc;
}
.filter {
    flex: 1;
    height: 16px;
    margin: 0 18px;
    padding: 0 3px;
    border: 1px solid #c4c4c4;
    background: #fff;
    font: inherit;
}
.filter::placeholder {
    color: #bbb;
}
.auto {
    margin-left: 18px;
    display: flex;
    align-items: center;
    gap: 3px;
}
.auto input {
    width: 10px;
    height: 10px;
    margin: 0;
    accent-color: #2a87d0;
}
.table-box {
    height: 246px;
    margin: 0 8px;
    border: 1px solid #ccc;
    background: #fff;
}
.dialog table {
    width: 100%;
    table-layout: fixed;
    border-collapse: collapse;
}
.dialog th,
.dialog td {
    height: 14px;
    padding: 0 0 0 2px;
    font-weight: 400;
    text-align: left;
    white-space: nowrap;
}
.dialog thead,
.dialog .cat {
    background: #f0f0f0;
}
.dialog .cat td {
    padding-left: 17px;
    font-weight: 600;
}
.dialog .cat em {
    display: inline-block;
    width: 15px;
    font-size: 10px;
    font-weight: 400;
}
.dialog .alt {
    background: #f6f6f6;
}
.dialog td svg {
    width: 10px;
    height: 10px;
    margin-right: 5px;
    display: inline-block;
    vertical-align: middle;
}
.dialog .l1 {
    padding-left: 29px;
}
.dialog .l2 {
    padding-left: 43px;
}
.dialog .l3 {
    padding-left: 56px;
}
.c1 {
    width: 111px;
}
.c2 {
    width: 81px;
}
.c3 {
    width: 47px;
}
.c4 {
    width: 218px;
}
.c5 {
    width: 78px;
}
.ok {
    align-self: flex-end;
    width: 60px;
    height: 18px;
    margin: 9px 17px 0 0;
    border: 1px solid #ccc;
    background: #e6e6e6;
}

/* canvas */
.canvas {
    position: relative;
    flex: 1;
    min-height: 0;
}
.browser {
    width: 599px;
    margin: 8px 0 0 8px;
}
.browser-head {
    height: 49px;
    padding: 0 22px 0 10px;
    display: flex;
    align-items: center;
    gap: 18px;
    border: 1px solid #c8c8c8;
    border-width: 1px 2px 2px 1px;
    background: #f0f0f0;
    color: #666;
}
.browser-head .right {
    margin-left: auto;
}
.row {
    height: 40px;
    margin: 8px 0 0 74px;
    display: flex;
    align-items: center;
    gap: 20px;
    font-size: 23px;
}
.root {
    margin: 11px 0 0 37px;
}
.chip {
    height: 40px;
    padding: 0 21px 0 6px;
    display: flex;
    align-items: center;
    gap: 18px;
    background: #f0f0f0;
}
.chip span {
    margin-left: 10px;
}
.chip .g {
    color: #999;
    margin-right: 2px;
}
.root .chip {
    padding-right: 15px;
    gap: 11px;
}
.name {
    width: 420px;
    height: 32px;
    padding-left: 8px;
    display: flex;
    align-items: center;
    gap: 31px;
    background: #999;
    color: #fff;
    font-weight: 700;
    white-space: nowrap;
}
.chip input {
    appearance: none;
    width: 26px;
    height: 26px;
    margin: 0;
    border: 1px solid #444;
    border-radius: 50%;
    background: radial-gradient(circle, #222 4px, #dde3ee 5px);
}
.tri {
    width: 14px;
    height: 18px;
    fill: #fff;
    stroke: #111;
    stroke-width: 2;
}
.hatch {
    position: relative;
}
.hatch::after {
    content: "";
    position: absolute;
    left: 48px;
    right: 0;
    bottom: 3px;
    height: 8px;
    background: repeating-linear-gradient(125deg, #7693b5 0 4px, transparent 4px 10px);
}
.notice {
    position: absolute;
    left: 1231px;
    top: 8px;
    height: 47px;
    padding: 0 25px 0 28px;
    display: flex;
    align-items: center;
    background: #f0f0f0;
    font-size: 23px;
}
.notice span {
    padding: 8px 22px 9px 0;
    border-right: 2px solid #ccc;
}
.notice a {
    padding-left: 27px;
    color: #006eaf;
}
.model {
    position: absolute;
    left: 1300px;
    top: 366px;
    width: 700px;
    height: 560px;
}
.cube {
    position: absolute;
    right: 30px;
    top: 36px;
    width: 190px;
    height: 190px;
}
.face {
    fill: #a0a0a0;
    font: 700 24px "Liberation Sans", sans-serif;
    text-anchor: middle;
    dominant-baseline: middle;
}
.small {
    font-size: 16px;
}
.axis {
    font: 30px "Liberation Sans", sans-serif;
}
.x {
    fill: #fb6a70;
}
.y {
    fill: #38e35c;
}
.navbar {
    position: absolute;
    left: 1204px;
    bottom: 12px;
    width: 400px;
    height: 48px;
    padding-left: 7px;
    display: flex;
    align-items: center;
    gap: 12px;
    background: #f0f0f0;
}

/* timeline */
.timeline {
    height: 102px;
    padding: 4px 26px 0 24px;
    display: flex;
    align-items: center;
    border-top: 5px solid #cacaca;
    background: #f0f0f0;
}
.playback {
    width: 246px;
    padding-right: 24px;
    display: flex;
    align-items: center;
    justify-content: space-between;
    fill: #666;
}
.track {
    position: relative;
    flex: 1;
    align-self: stretch;
    padding: 27px 22px 0;
    display: flex;
    gap: 16px;
    border-bottom: 2px solid #ccc;
}
.track button,
.track svg:not(.marker) {
    width: 32px;
    height: 32px;
}
.track::after {
    content: "";
    position: absolute;
    left: 38px;
    top: 63px;
    width: 292px;
    height: 15px;
    border-bottom: 5px solid #c9c9c9;
    background: repeating-linear-gradient(90deg, #c9c9c9 0 4px, transparent 4px 48px);
}
.marker {
    position: absolute;
    left: 338px;
    top: 15px;
}
.settings {
    margin-left: 36px;
    color: #777;
}
.commands {
    height: 48px;
    padding: 0 12px 4px;
    display: flex;
    align-items: center;
    gap: 20px;
    border-bottom: 3px solid #cacaca;
    background: #f0f0f0;
    color: #666;
    font-size: 23px;
}
```
